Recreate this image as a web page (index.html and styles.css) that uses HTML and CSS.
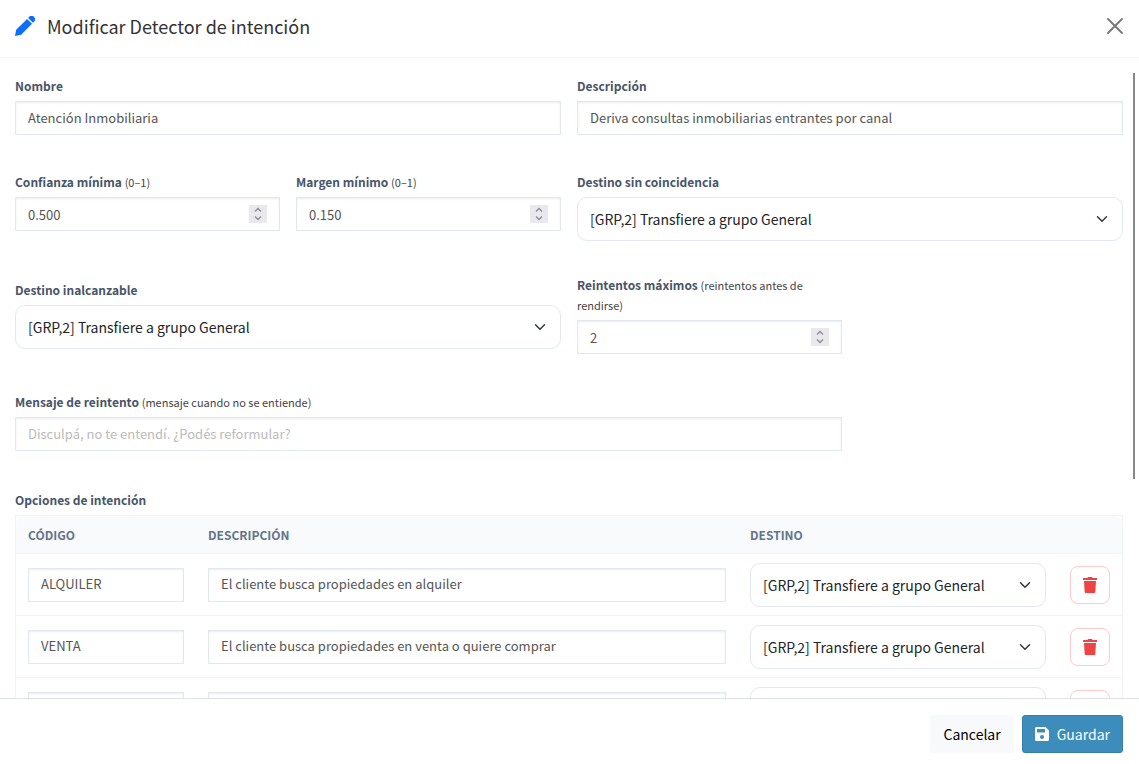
FILE: index.html
```html
<!DOCTYPE html>
<html lang="es">
<head>
<meta charset="utf-8">
<meta name="viewport" content="width=device-width, initial-scale=1">
<title>Modificar Detector de intención</title>
<link rel="stylesheet" href="styles.css">
</head>
<body>
<svg class="sprite" aria-hidden="true">
  <symbol id="spin" viewBox="0 0 18 18"><path d="M6 6.500 9 3.500l3 3M6 11.500l3 3 3-3" fill="none" stroke="#8f8f9d" stroke-width="1.5"/></symbol>
  <symbol id="trash" viewBox="0 0 14 16"><path d="M0 1h4.300L5 0h4l.7 1H14v2H0zM1 4h12l-.7 11a1 1 0 0 1-1 1H2.700a1 1 0 0 1-1-1z" fill="currentColor"/></symbol>
</svg>
<form class="modal">
  <header class="modal-header">
    <svg class="icon-pencil" viewBox="0 0 20 20" aria-hidden="true"><path d="M12.100 2.900 17 7.800 6.100 18.700 0 20l1.200-6.200zM13.100 1.900l1-1a3.200 3.200 0 0 1 4.900 0 3.200 3.200 0 0 1 0 4.900l-1 1z" fill="#0d6efd"/></svg>
    <h1 class="modal-title">Modificar Detector de intención</h1>
    <button class="close" type="button" aria-label="Cerrar"><svg viewBox="0 0 16 16" width="16" height="16"><path d="M1 1l14 14M15 1 1 15" stroke="#777" stroke-width="1.8" stroke-linecap="round"/></svg></button>
  </header>

  <div class="modal-main">
    <div class="modal-body">
      <div class="form-row">
        <div class="field span-2"><label class="label" for="nombre">Nombre</label><input class="input" id="nombre" type="text" value="Atención Inmobiliaria"></div>
        <div class="field span-2"><label class="label" for="descripcion">Descripción</label><input class="input" id="descripcion" type="text" value="Deriva consultas inmobiliarias entrantes por canal"></div>
      </div>
      <div class="form-row">
        <div class="field"><label class="label" for="confianza">Confianza mínima <small class="hint">(0–1)</small></label><div class="number"><input class="number-input" id="confianza" type="number" step="0.001" value="0.500"><svg class="spin"><use href="#spin"/></svg></div></div>
        <div class="field"><label class="label" for="margen">Margen mínimo <small class="hint">(0–1)</small></label><div class="number"><input class="number-input" id="margen" type="number" step="0.001" value="0.150"><svg class="spin"><use href="#spin"/></svg></div></div>
        <div class="field span-2"><label class="label" for="sin">Destino sin coincidencia</label><select class="select" id="sin"><option>[GRP,2] Transfiere a grupo General</option></select></div>
      </div>
      <div class="form-row form-row-centered">
        <div class="field span-2"><label class="label" for="inalcanzable">Destino inalcanzable</label><select class="select" id="inalcanzable"><option>[GRP,2] Transfiere a grupo General</option></select></div>
        <div class="field"><label class="label" for="reintentos">Reintentos máximos <small class="hint">(reintentos antes de rendirse)</small></label><div class="number"><input class="number-input" id="reintentos" type="number" value="2"><svg class="spin"><use href="#spin"/></svg></div></div>
      </div>
      <div class="form-row">
        <div class="field span-3"><label class="label" for="mensaje">Mensaje de reintento <small class="hint">(mensaje cuando no se entiende)</small></label><input class="input" id="mensaje" type="text" placeholder="Disculpá, no te entendí. ¿Podés reformular?"></div>
      </div>
      <section class="field section">
        <h2 class="label">Opciones de intención</h2>
        <table class="options">
          <thead><tr><th class="col-code">Código</th><th>Descripción</th><th class="col-target">Destino</th><th class="col-action"></th></tr></thead>
          <tbody>
            <tr><td><input class="input" type="text" aria-label="Código" value="ALQUILER"></td><td><input class="input" type="text" aria-label="Descripción" value="El cliente busca propiedades en alquiler"></td><td><select class="select" aria-label="Destino"><option>[GRP,2] Transfiere a grupo General</option></select></td><td><button class="delete" type="button" aria-label="Eliminar"><svg width="14" height="16"><use href="#trash"/></svg></button></td></tr>
            <tr><td><input class="input" type="text" aria-label="Código" value="VENTA"></td><td><input class="input" type="text" aria-label="Descripción" value="El cliente busca propiedades en venta o quiere comprar"></td><td><select class="select" aria-label="Destino"><option>[GRP,2] Transfiere a grupo General</option></select></td><td><button class="delete" type="button" aria-label="Eliminar"><svg width="14" height="16"><use href="#trash"/></svg></button></td></tr>
            <tr><td><input class="input" type="text" aria-label="Código"></td><td><input class="input" type="text" aria-label="Descripción"></td><td><select class="select" aria-label="Destino"><option></option></select></td><td><button class="delete" type="button" aria-label="Eliminar"><svg width="14" height="16"><use href="#trash"/></svg></button></td></tr>
          </tbody>
        </table>
      </section>
    </div>
    <div class="scroll-thumb"></div>
  </div>

  <footer class="modal-footer">
    <button class="btn btn-light" type="button">Cancelar</button>
    <button class="btn btn-primary" type="submit"><svg width="14" height="14" viewBox="0 0 14 14" aria-hidden="true"><path fill="#fff" fill-rule="evenodd" d="M1.500 0h9L14 3.500v9a1.500 1.500 0 0 1-1.500 1.500h-11A1.500 1.500 0 0 1 0 12.500v-11A1.500 1.500 0 0 1 1.500 0zM2 2v3.500h8V2zM7 8a2 2 0 1 0 0 4 2 2 0 0 0 0-4z"/></svg>Guardar</button>
  </footer>
</form>
</body>
</html>
```
FILE: styles.css
```css
* { box-sizing: border-box; }
body {
  margin: 0;
  background: #fff;
  color: #212529;
  font-family: "Noto Sans CJK SC", "Noto Sans", sans-serif;
  font-size: 14px;
}
button, input, select { font: inherit; }
.sprite { display: none; }

.modal { display: flex; flex-direction: column; height: 100vh; }
.modal-header {
  display: flex;
  align-items: center;
  gap: 12px;
  padding: 11px 16px 16px 15px;
  border-bottom: 1px solid #f1f3f5;
}
.icon-pencil { width: 20px; height: 20px; }
.modal-title { flex: 1; margin: 0; font-size: 18px; font-weight: 400; line-height: 30px; color: #333; }
.close { display: flex; padding: 0; border: 0; background: none; }

.modal-main { position: relative; flex: 1; min-height: 0; }
.modal-body {
  height: 100%;
  padding: 18px 16px 16px 15px;
  overflow-y: auto;
  scrollbar-width: none;
}
.scroll-thumb {
  position: absolute;
  top: 15px;
  right: 4px;
  width: 2px;
  height: 406px;
  background: #888;
}

.form-row {
  display: grid;
  grid-template-columns: repeat(4, 1fr);
  align-items: start;
  gap: 16px;
  margin-bottom: 37px;
}
.form-row-centered { align-items: center; margin-top: -3px; margin-bottom: 38px; }
.span-2 { grid-column: span 2; }
.span-3 { grid-column: span 3; }
.field { display: flex; flex-direction: column; gap: 5px; min-width: 0; }
.section { margin-top: 39px; }
.label { margin: 0; font-size: 12px; font-weight: 700; line-height: 20px; color: #475569; }
.hint { font-size: 11px; font-weight: 400; line-height: 1; color: #444; }

.input, .number {
  width: 100%;
  height: 34px;
  border: 1px solid #e2e8f0;
  border-radius: 0;
  background: #fff;
  box-shadow: inset 0 1px 2px rgba(0, 0, 0, 0.08);
  color: #555;
}
.input { display: block; padding: 0 12px 2px; font-size: 13px; }
.input::placeholder { color: #bbb; }
.number { display: flex; align-items: center; padding: 0 12px; }
.number-input {
  flex: 1;
  min-width: 0;
  padding: 0;
  border: 0;
  background: none;
  color: inherit;
  font-size: 13px;
  appearance: textfield;
}
.number-input::-webkit-inner-spin-button { display: none; }
.spin { width: 18px; height: 18px; background: #e9e9ed; }

.select {
  display: block;
  width: 100%;
  height: 44px;
  padding: 0 36px 0 12px;
  border: 1px solid #e2e8f0;
  border-radius: 10px;
  appearance: none;
  background: #fff url("data:image/svg+xml,%3Csvg xmlns='http://www.w3.org/2000/svg' viewBox='0 0 16 16'%3E%3Cpath fill='none' stroke='%23343a40' stroke-linecap='round' stroke-linejoin='round' stroke-width='2' d='m2 5 6 6 6-6'/%3E%3C/svg%3E") no-repeat right 14px center / 12px 12px;
  color: #212529;
}

.options {
  width: 100%;
  border: 1px solid #f1f3f5;
  border-spacing: 0;
  table-layout: fixed;
}
.options th {
  height: 38px;
  padding: 0 12px;
  border-bottom: 1px solid #f1f3f5;
  background: #f8fafc;
  color: #64748b;
  font-size: 12px;
  font-weight: 700;
  line-height: 16px;
  text-align: left;
  text-transform: uppercase;
}
.options th:first-child { border-top-left-radius: 8px; }
.options th:last-child { border-top-right-radius: 8px; }
.options td { height: 62px; padding: 0 12px; border-bottom: 1px solid #f1f3f5; }
.col-code { width: 180px; }
.col-target { width: 320px; }
.col-action { width: 64px; }
.delete {
  display: flex;
  align-items: center;
  justify-content: center;
  width: 40px;
  height: 38px;
  padding: 0;
  border: 1px solid #fecaca;
  border-radius: 8px;
  background: #fff;
  color: #ef4444;
}

.modal-footer {
  display: flex;
  justify-content: flex-end;
  gap: 8px;
  padding: 16px 16px 11px;
  border-top: 1px solid #dee2e6;
}
.btn {
  display: flex;
  align-items: center;
  gap: 8px;
  height: 38px;
  padding: 0 12px;
  border: 1px solid #f8f9fa;
  border-radius: 3px;
  background: #f8f9fa;
  color: #000;
}
.btn-primary { border-color: #367fa9; background: #3c8dbc; color: #fff; }
```
